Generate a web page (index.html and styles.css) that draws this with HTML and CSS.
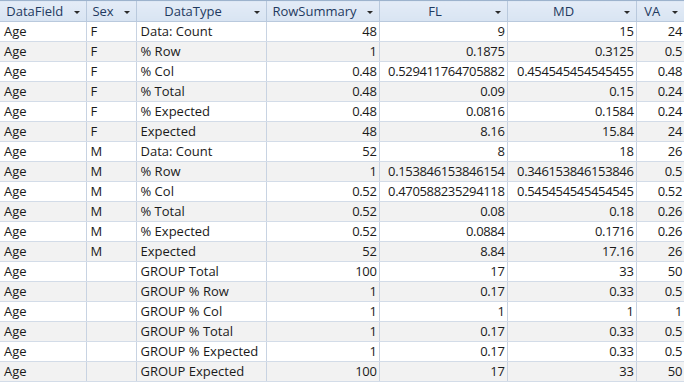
FILE: index.html
```html
<!DOCTYPE html>
<html>
<head>
    <title>Datasheet</title>
    <link rel="stylesheet" href="styles.css">
</head>
<body>
    <table class="datasheet">
        <colgroup>
            <col class="c-field">
            <col class="c-sex">
            <col class="c-type">
            <col class="c-sum">
            <col class="c-fl">
            <col class="c-md">
            <col class="c-va">
        </colgroup>
        <thead>
            <tr>
                <th><div class="head"><span class="label">DataField</span><span class="arrow"></span></div></th>
                <th><div class="head"><span class="label">Sex</span><span class="arrow"></span></div></th>
                <th><div class="head"><span class="label">DataType</span><span class="arrow"></span></div></th>
                <th><div class="head"><span class="label">RowSummary</span><span class="arrow"></span></div></th>
                <th><div class="head"><span class="label">FL</span><span class="arrow"></span></div></th>
                <th><div class="head"><span class="label">MD</span><span class="arrow"></span></div></th>
                <th><div class="head"><span class="label">VA</span><span class="arrow"></span></div></th>
            </tr>
        </thead>
        <tbody>
            <tr><td>Age</td><td>F</td><td>Data: Count</td><td class="num">48</td><td class="num">9</td><td class="num">15</td><td class="num">24</td></tr>
            <tr><td>Age</td><td>F</td><td>% Row</td><td class="num">1</td><td class="num">0.1875</td><td class="num">0.3125</td><td class="num">0.5</td></tr>
            <tr><td>Age</td><td>F</td><td>% Col</td><td class="num">0.48</td><td class="num">0.529411764705882</td><td class="num">0.454545454545455</td><td class="num">0.48</td></tr>
            <tr><td>Age</td><td>F</td><td>% Total</td><td class="num">0.48</td><td class="num">0.09</td><td class="num">0.15</td><td class="num">0.24</td></tr>
            <tr><td>Age</td><td>F</td><td>% Expected</td><td class="num">0.48</td><td class="num">0.0816</td><td class="num">0.1584</td><td class="num">0.24</td></tr>
            <tr><td>Age</td><td>F</td><td>Expected</td><td class="num">48</td><td class="num">8.16</td><td class="num">15.84</td><td class="num">24</td></tr>
            <tr><td>Age</td><td>M</td><td>Data: Count</td><td class="num">52</td><td class="num">8</td><td class="num">18</td><td class="num">26</td></tr>
            <tr><td>Age</td><td>M</td><td>% Row</td><td class="num">1</td><td class="num">0.153846153846154</td><td class="num">0.346153846153846</td><td class="num">0.5</td></tr>
            <tr><td>Age</td><td>M</td><td>% Col</td><td class="num">0.52</td><td class="num">0.470588235294118</td><td class="num">0.545454545454545</td><td class="num">0.52</td></tr>
            <tr><td>Age</td><td>M</td><td>% Total</td><td class="num">0.52</td><td class="num">0.08</td><td class="num">0.18</td><td class="num">0.26</td></tr>
            <tr><td>Age</td><td>M</td><td>% Expected</td><td class="num">0.52</td><td class="num">0.0884</td><td class="num">0.1716</td><td class="num">0.26</td></tr>
            <tr><td>Age</td><td>M</td><td>Expected</td><td class="num">52</td><td class="num">8.84</td><td class="num">17.16</td><td class="num">26</td></tr>
            <tr><td>Age</td><td></td><td>GROUP Total</td><td class="num">100</td><td class="num">17</td><td class="num">33</td><td class="num">50</td></tr>
            <tr><td>Age</td><td></td><td>GROUP % Row</td><td class="num">1</td><td class="num">0.17</td><td class="num">0.33</td><td class="num">0.5</td></tr>
            <tr><td>Age</td><td></td><td>GROUP % Col</td><td class="num">1</td><td class="num">1</td><td class="num">1</td><td class="num">1</td></tr>
            <tr><td>Age</td><td></td><td>GROUP % Total</td><td class="num">1</td><td class="num">0.17</td><td class="num">0.33</td><td class="num">0.5</td></tr>
            <tr><td>Age</td><td></td><td>GROUP % Expected</td><td class="num">1</td><td class="num">0.17</td><td class="num">0.33</td><td class="num">0.5</td></tr>
            <tr><td>Age</td><td></td><td>GROUP Expected</td><td class="num">100</td><td class="num">17</td><td class="num">33</td><td class="num">50</td></tr>
        </tbody>
    </table>
</body>
</html>
```

FILE: styles.css
```css
body {
    margin: 0;
    background-color: #fff;
    font-family: "Open Sans", "Liberation Sans", sans-serif;
    font-size: 13px;
    color: #1a1a1a;
}
.datasheet {
    border-collapse: collapse;
    table-layout: fixed;
    width: 684px;
}
.c-field { width: 86px; }
.c-sex { width: 50px; }
.c-type { width: 130px; }
.c-sum { width: 113px; }
.c-fl { width: 128px; }
.c-md { width: 129px; }
.c-va { width: 48px; }

.datasheet th {
    height: 20px;
    padding: 0;
    border-top: 1px solid #9db3cd;
    border-bottom: 1px solid #b9c9dd;
    border-left: 1px solid #b9c9dd;
    background: linear-gradient(#e4ecf7, #d8e4f2);
    color: #1f3a60;
    font-weight: normal;
}
.datasheet th:first-child {
    border-left: 0;
}
.head {
    display: flex;
    align-items: center;
    height: 20px;
}
.label {
    flex: 1;
    text-align: center;
    white-space: nowrap;
}
.arrow {
    width: 14px;
    height: 20px;
    display: flex;
    align-items: center;
    justify-content: center;
    margin-right: 2px;
}
.arrow::before {
    content: "";
    border-left: 3px solid transparent;
    border-right: 3px solid transparent;
    border-top: 3px solid #2b2b2b;
    margin-top: 2px;
}
.datasheet td {
    height: 19px;
    padding: 0 4px;
    border-bottom: 1px solid #d3dce8;
    border-left: 1px solid #c8d3e2;
    white-space: nowrap;
    overflow: hidden;
    line-height: 19px;
}
.datasheet td:first-child {
    border-left: 0;
}
.datasheet td.num {
    text-align: right;
    padding: 0 2px 0 0;
    letter-spacing: -0.35px;
}
.datasheet tbody tr:nth-child(even) td {
    background-color: #f2f2f2;
}
```
